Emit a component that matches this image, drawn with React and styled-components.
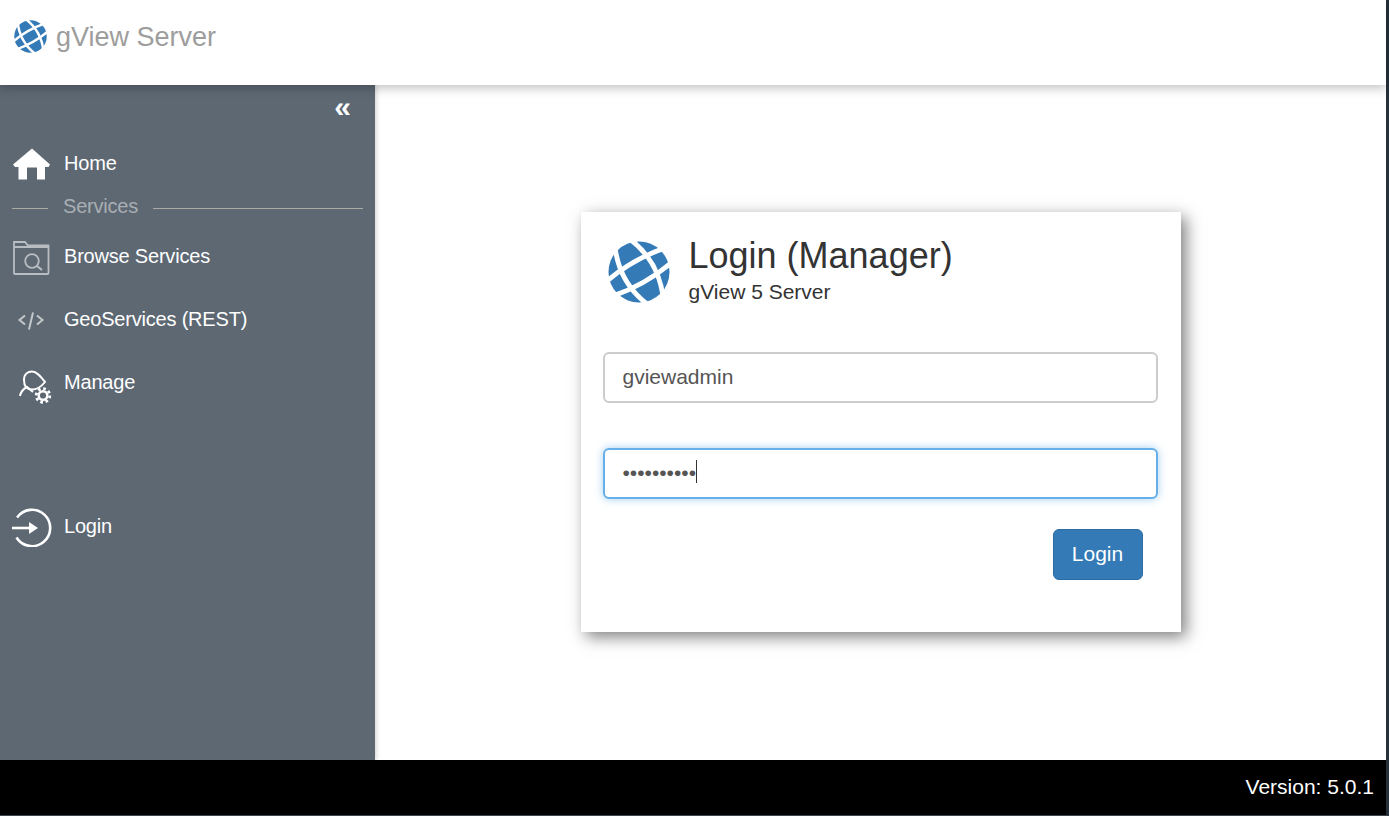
import React from 'react';
import styled, { createGlobalStyle } from 'styled-components';

const GlobalStyle = createGlobalStyle`
    html, body {
      margin: 0;
      padding: 0;
      background: #fff;
    }

    body {
      font-family: "Liberation Sans", Arial, sans-serif;
      overflow: hidden;
    }

    * {
      box-sizing: border-box;
    }
`;

const Page = styled.div`
    width: 1389px;
    height: 816px;
    display: flex;
    flex-direction: column;
    border-right: 3px solid #27313a;
    border-bottom: 1px solid #3b4650;
`;

const Header = styled.header`
    height: 85px;
    flex: none;
    position: relative;
    z-index: 2;
    display: flex;
    align-items: flex-start;
    gap: 9px;
    padding: 20px 0 0 14px;
    background: #fff;
    box-shadow: 0 3px 10px rgba(0, 0, 0, 0.25);
`;

const Brand = styled.div`
    margin-top: 1px;
    font-size: 27px;
    line-height: 32px;
    color: #9d9d9d;
`;

const Body = styled.div`
    flex: 1;
    min-height: 0;
    display: flex;
`;

const Sidebar = styled.nav`
    width: 375px;
    flex: none;
    position: relative;
    z-index: 1;
    padding-top: 11px;
    background: #5d6873;
    box-shadow: 1px 0 5px rgba(0, 0, 0, 0.2);
`;

const Collapse = styled.div`
    height: 36px;
    padding-right: 24px;
    text-align: right;
    font-size: 30px;
    font-weight: 700;
    line-height: 22px;
    color: #fff;
`;

const NavItem = styled.div`
    height: 63px;
    display: flex;
    align-items: center;
    margin-top: ${(p) => p.$gap || 0}px;
    color: #fff;
    font-size: 20px;
    letter-spacing: -0.2px;
`;

const NavIcon = styled.span`
    width: 64px;
    flex: none;
    display: flex;
    padding-left: 12px;
`;

const Divider = styled.div`
    height: 22px;
    margin: 0 12px 8px;
    display: flex;
    align-items: center;
    gap: 15px;
    color: #a9aeb3;
    font-size: 20px;
    letter-spacing: -0.2px;

    &::before,
    &::after {
      content: '';
      height: 1px;
      margin-top: 5px;
      background: #a9a9a5;
    }

    &::before {
      width: 36px;
    }

    &::after {
      flex: 1;
    }
`;

const Main = styled.main`
    flex: 1;
    min-width: 0;
    display: flex;
    align-items: center;
    justify-content: center;
    padding-bottom: 1px;
    background: #fff;
`;

const Card = styled.form`
    width: 600px;
    height: 420px;
    padding: 22px 23px 0 22px;
    background: #fff;
    box-shadow: 5px 5px 15px rgba(0, 0, 0, 0.5);
`;

const CardHead = styled.div`
    display: flex;
    gap: 19px;
    padding-left: 5px;
    margin-bottom: 49px;
`;

const CardGlobe = styled.div`
    display: flex;
    padding-top: 7px;
`;

const Titles = styled.div`
    padding-top: 1px;
`;

const Title = styled.h1`
    margin: 0;
    font-size: 36px;
    font-weight: 400;
    line-height: 42px;
    color: #333;
`;

const Subtitle = styled.div`
    margin-top: 3px;
    font-size: 21px;
    line-height: 23px;
    color: #333;
`;

const Field = styled.div`
    position: relative;
    margin-bottom: 45px;
`;

const Input = styled.input`
    display: block;
    width: 100%;
    height: 51px;
    padding: 0 18px 2px;
    border: 2px solid ${(p) => (p.$focus ? '#66afe9' : '#ccc')};
    border-radius: 6px;
    outline: none;
    background: #fff;
    color: #555;
    font-family: "Liberation Sans", Arial, sans-serif;
    font-size: 21px;
    caret-color: transparent;
    box-shadow: ${(p) => (p.$focus ? '0 0 8px rgba(102, 175, 233, 0.6)' : 'none')};
`;

const Caret = styled.span`
    position: absolute;
    left: 93px;
    top: 12px;
    width: 1px;
    height: 23px;
    background: #333;
`;

const Actions = styled.div`
    display: flex;
    justify-content: flex-end;
    padding-right: 15px;
    margin-top: -15px;
`;

const Button = styled.button`
    width: 90px;
    height: 51px;
    padding: 0 0 2px;
    border: 1px solid #2e6da4;
    border-radius: 6px;
    background: #337ab7;
    color: #fff;
    font-family: "Liberation Sans", Arial, sans-serif;
    font-size: 21px;
`;

const Footer = styled.footer`
    height: 55px;
    flex: none;
    display: flex;
    justify-content: flex-end;
    padding: 15px 12px 0 0;
    background: #000;
    color: #fff;
    font-size: 21px;
    line-height: 24px;
`;

function Globe({ size }) {
    return (
        <svg width={size} height={size} viewBox="0 0 64 64" style={{ flex: 'none' }}>
            <circle cx="32" cy="32" r="31.5" fill="#337ab7" />
            <g
                transform="rotate(-30 32 32)"
                fill="none"
                stroke="#fff"
                strokeWidth="5"
            >
                <path d="M24 -4 Q8 32 24 68" />
                <path d="M40 -4 Q56 32 40 68" />
                <path d="M-4 24 Q32 17 68 24" />
                <path d="M-4 40 Q32 47 68 40" />
            </g>
        </svg>
    );
}

const HomeIcon = () => (
    <svg width="40" height="34" viewBox="0 0 40 34">
        <path
            d="M20 1.500 L38 17.500 L36.500 20 L33 20 L33 32.500 L25 32.500 L25 20.500 L15 20.500 L15 32.500 L6.500 32.500 L6.500 20 L3 20 L1 17.500 Z"
            fill="#fff"
        />
    </svg>
);

const FolderIcon = () => (
    <svg width="40" height="36" viewBox="0 0 40 36" fill="none" stroke="#b9bdc2" strokeWidth="1.800">
        <path d="M2 34 V3 H13 L16 6.500 H36.500 V34 Q36.500 35 35.500 35 H3 Q2 35 2 34 Z" />
        <path d="M2 8 H36.500" />
        <circle cx="20" cy="22" r="6.800" strokeWidth="1.800" />
        <path d="M25 27 L30 31" strokeWidth="2.200" />
    </svg>
);

const CodeIcon = () => (
    <svg width="40" height="22" viewBox="0 0 40 22" fill="none" stroke="#c4c7ca" strokeWidth="2">
        <path d="M13 6.500 L7.500 11 L13 15.500" />
        <path d="M21 3.500 L17 20.500" />
        <path d="M25 6.500 L30.500 11 L25 15.500" />
    </svg>
);

const ManageIcon = () => (
    <svg width="42" height="42" viewBox="0 0 42 42" fill="none" stroke="#fff" strokeWidth="2">
        <path d="M12 18 C12 12 16 9.500 20 9.500 C25 9.500 29 15 33 20 C29 25 25 27.500 20 27.500 C15 27.500 12 24 12 18 Z" />
        <path d="M8 34 C9 29 11 27 15 25 L21 30" />
        <circle cx="31" cy="33.500" r="4.300" strokeWidth="2.400" />
        <circle
            cx="31"
            cy="33.500"
            r="6.800"
            strokeWidth="2.800"
            strokeDasharray="2.670 2.670"
        />
    </svg>
);

const LoginIcon = () => (
    <svg width="40" height="40" viewBox="0 0 40 40" fill="none" stroke="#fff" strokeWidth="2.600">
        <path d="M5.100 10.500 A18.200 18.200 0 1 1 4.500 30.500" />
        <path d="M0 21 H20" />
        <path d="M17 15 L26 21 L17 27 Z" fill="#fff" stroke="none" />
    </svg>
);

export default function App() {
    return (
        <>
            <GlobalStyle />
            <Page>
                <Header>
                    <Globe size={33} />
                    <Brand>gView Server</Brand>
                </Header>
                <Body>
                    <Sidebar>
                        <Collapse>«</Collapse>
                        <NavItem>
                            <NavIcon><HomeIcon /></NavIcon>
                            Home
                        </NavItem>
                        <Divider>Services</Divider>
                        <NavItem>
                            <NavIcon><FolderIcon /></NavIcon>
                            Browse Services
                        </NavItem>
                        <NavItem>
                            <NavIcon><CodeIcon /></NavIcon>
                            GeoServices (REST)
                        </NavItem>
                        <NavItem>
                            <NavIcon><ManageIcon /></NavIcon>
                            Manage
                        </NavItem>
                        <NavItem $gap={81}>
                            <NavIcon><LoginIcon /></NavIcon>
                            Login
                        </NavItem>
                    </Sidebar>
                    <Main>
                        <Card onSubmit={(e) => e.preventDefault()}>
                            <CardHead>
                                <CardGlobe><Globe size={62} /></CardGlobe>
                                <Titles>
                                    <Title>Login (Manager)</Title>
                                    <Subtitle>gView 5 Server</Subtitle>
                                </Titles>
                            </CardHead>
                            <Field>
                                <Input type="text" defaultValue="gviewadmin" />
                            </Field>
                            <Field>
                                <Input $focus type="password" defaultValue="0123456789" />
                                <Caret />
                            </Field>
                            <Actions>
                                <Button type="submit">Login</Button>
                            </Actions>
                        </Card>
                    </Main>
                </Body>
                <Footer>Version: 5.0.1</Footer>
            </Page>
        </>
    );
}
